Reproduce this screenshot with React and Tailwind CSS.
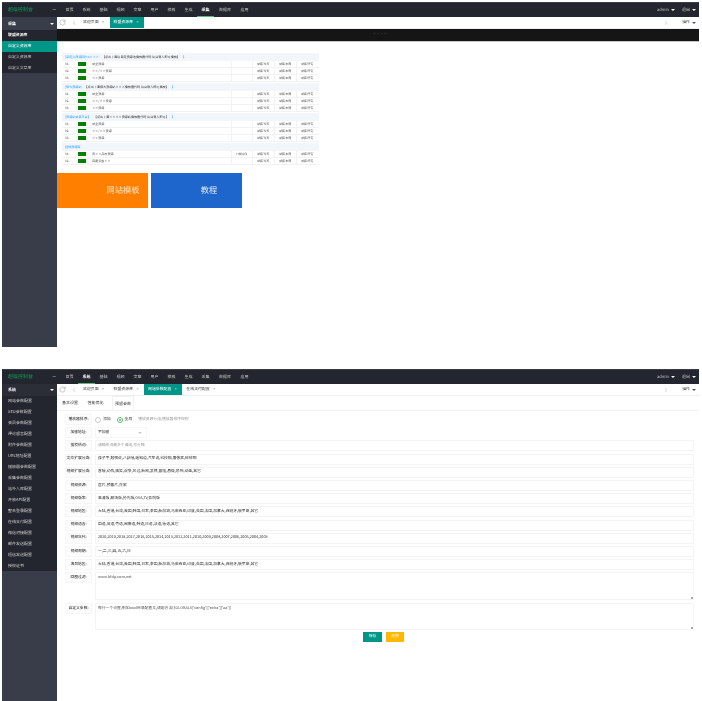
import { ChevronLeft, ChevronRight, RotateCw } from 'lucide-react';

const NAV = ['首页', '系统', '基础', '视频', '文章', '用户', '模板', '生成', '采集', '数据库', '应用'];
const COLLECT_MENU = ['联盟资源库', '自定义资源库', '自定义资源库', '自定义文章库'];
const SYSTEM_MENU = [
  '网站参数配置', 'SEO参数配置', '会员参数配置', '评论留言配置', '附件参数配置', 'URL地址配置', '播放器参数配置', '采集参数配置',
  '站外入库配置', '开放API配置', '整合登录配置', '在线支付配置', '微信对接配置', '邮件发送配置', '短信发送配置', '授权证书',
];

const AREAS = '大陆,香港,台湾,美国,韩国,日本,泰国,新加坡,马来西亚,印度,英国,法国,加拿大,西班牙,俄罗斯,其它';
const FIELDS = [
  ['文章扩展分类:', '孩子不,勉强说,八卦哦,遥知道,汽车说,科技咖,奢侈家,碎碎啊'],
  ['视频扩展分类:', '喜哦,动作,搞笑,战争,风过,新闻,武侠,冒险,悬疑,恐怖,动画,其它'],
  ['视频资源:', '正片,预告片,花絮'],
  ['视频版本:', '高清版,剧场版,抢先版,OVA,TV,影院版'],
  ['视频地区:', AREAS],
  ['视频语言:', '国语,英语,粤语,闽南语,韩语,日语,法语,德语,其它'],
  ['视频年代:', '2020,2019,2018,2017,2016,2015,2014,2013,2012,2011,2010,2009,2008,2007,2006,2005,2004,2003'],
  ['视频周期:', '一,二,三,四,五,六,日'],
  ['演员地区:', AREAS],
];

const SECTIONS = [
  { title: '[自定义资源网Pro×××', note: '【点击下面后自定资源地播放器代码 后台导入即可播放】', rows: ['采全资源', '××/××资源', '××资源'] },
  { title: '[猫大资源站', note: '【点击下面猫大资源站×××播放器代码 后台导入即可播放】', rows: ['采全资源', '××/××资源', '××资源'] },
  { title: '[资源站采集平台】', note: '【点击下面××××资源站播放器代码 后台导入即可】', rows: ['采全资源', '××/××资源', '××资源'] },
  { title: '挂载资源库', note: '', rows: ['青××品质资源', '百度云盘××'] },
];

function Caret({ className = 'border-t-white' }) {
  return <span className={`inline-block w-0 h-0 border-x-[2px] border-x-transparent border-t-[2px] ${className}`} />;
}

function Header({ active }) {
  return (
    <div className="h-[15px] bg-[#23262e] flex items-center text-[4px] text-[#c2c2c2] border-t border-[#3a3d45]">
      <div className="w-[54px] shrink-0 pl-[6px] flex justify-between items-center">
        <span className="text-[#0f9d58] text-[5px]">超级控制台</span>
        <span className="text-white leading-none">—</span>
      </div>
      <nav className="flex ml-[5px] h-full">
        {NAV.map((item) => (
          <span
            key={item}
            className={`flex items-center justify-center h-full ${item === '数据库' ? 'w-[22px]' : 'w-[17px]'} ${item === active ? 'text-white font-bold border-b border-[#5fb878]' : ''}`}
          >
            {item}
          </span>
        ))}
      </nav>
      <div className="ml-auto flex items-center gap-[2px] pr-[3px]">
        <span>admin</span>
        <Caret />
        <span className="ml-[5px]">退出</span>
        <Caret />
      </div>
    </div>
  );
}

function TabBar({ tabs }) {
  return (
    <div className="h-[12px] bg-white flex items-center text-[3.9px] text-[#444] border-b border-[#eeeeee]">
      <div className="flex items-center h-full w-[22px] shrink-0 pl-[2px] gap-[5px]">
        <RotateCw className="w-[7px] h-[7px] text-[#888]" strokeWidth={1.5} />
        <ChevronLeft className="w-[6px] h-[6px] text-[#888]" strokeWidth={1.5} />
      </div>
      {tabs.map((tab) => (
        <span
          key={tab.name}
          className={`h-full flex items-center gap-[3px] pl-[4px] pr-[6px] ${tab.active ? 'bg-[#009688] text-white' : ''}`}
        >
          {tab.name}
          <span className="text-[3px] w-[2px]">×</span>
        </span>
      ))}
      <div className="ml-auto flex items-center pr-[3px]">
        <ChevronRight className="w-[6px] h-[6px] text-[#888] mr-[13px]" strokeWidth={1.5} />
        <span className="mr-[2px]">操作</span>
        <Caret className="border-t-[#555]" />
      </div>
    </div>
  );
}

function SideHead({ title, className }) {
  return (
    <div className={`flex items-center justify-between pl-[6px] pr-[3px] text-[4px] text-white font-bold ${className}`}>
      <span>{title}</span>
      <Caret />
    </div>
  );
}

function CollectSection({ section }) {
  return (
    <div>
      <div className="h-[8px] bg-[#f2f6fa] flex items-center pl-[3px] text-[3.1px] text-[#333] gap-[3px]">
        <span className="text-[#1e9fff]">{section.title}</span>
        <span>{section.note}</span>
        {section.note && <span className="text-[#1e9fff]">】</span>}
      </div>
      {section.rows.map((name, i) => (
        <div key={i} className="h-[7px] flex items-center text-[3.1px] text-[#555] border-b border-[#f2f2f2]">
          <span className="w-[16px] pl-[3px] shrink-0">0{i + 1}.</span>
          <span className="w-[8px] h-[4px] bg-[#008000] shrink-0" />
          <span className="w-[145px] pl-[6px] shrink-0">{name}</span>
          <span className="w-[21px] pl-[3px] shrink-0 h-full flex items-center border-l border-[#f2f2f2]">{section.title === '挂载资源库' && i === 0 ? '下载插件' : ''}</span>
          <span className="w-[22px] pl-[4px] shrink-0 h-full flex items-center border-l border-[#f2f2f2]">采集当天</span>
          <span className="w-[22px] pl-[4px] shrink-0 h-full flex items-center border-l border-[#f2f2f2]">采集本周</span>
          <span className="pl-[4px] flex-1 h-full flex items-center border-l border-[#f2f2f2]">采集所有</span>
        </div>
      ))}
    </div>
  );
}

function Collect() {
  return (
    <section className="h-[345px] ml-[2px] w-[697px] flex flex-col">
      <Header active="采集" />
      <div className="flex flex-1 min-h-0">
        <aside className="w-[55px] shrink-0 bg-[#393d49] flex flex-col">
          <SideHead title="采集" className="h-[13px] bg-[#393d49]" />
          <div className="bg-[#23262e] h-[43px] text-[3.9px] text-[#c2c2c2]">
            {COLLECT_MENU.map((item, i) => (
              <div key={i} className={`h-[11px] flex items-center pl-[6px] ${i === 0 ? 'text-white font-bold h-[10.5px]' : ''} ${i === 1 ? 'bg-[#009688] text-white' : ''}`}>
                {item}
              </div>
            ))}
          </div>
        </aside>
        <main className="flex-1 min-w-0 bg-white">
          <TabBar tabs={[{ name: '欢迎页面' }, { name: '联盟资源库', active: true }]} />
          <div className="h-[13px] bg-[#151515] border-b border-[#c9c9c9] flex items-center justify-center text-[3.6px] text-[#444] pl-[4px]">
            ××××
          </div>
          <div className="mt-[11px] ml-[5px] w-[257px]">
            {SECTIONS.map((section, i) => (
              <div key={i} className={i < 3 ? 'h-[30px]' : ''}>
                <CollectSection section={section} />
              </div>
            ))}
          </div>
          <div className="flex mt-[8px] gap-[3px]">
            <div className="w-[91px] h-[35px] bg-[#ff8000] text-[#fbe6c8] text-[8.2px] flex items-center justify-center pl-[41px]">网站模板</div>
            <div className="w-[91px] h-[35px] bg-[#1e66cc] text-[#e8f0fb] text-[8.2px] flex items-center justify-center pl-[25px]">教程</div>
          </div>
        </main>
      </div>
    </section>
  );
}

function Label({ children }) {
  return (
    <div className="w-[27px] mr-[3px] h-[11px] shrink-0 flex items-center justify-center text-[#222] border border-[#f6f6f6] bg-[#fcfcfc]">{children}</div>
  );
}

function Row({ label, children }) {
  return (
    <div className="flex items-center mb-[2.2px]">
      <Label>{label}</Label>
      <div className="flex-1 min-w-0 h-[11px] border border-[#f4f4f4] flex items-center pl-[2px] text-[#333]">{children}</div>
    </div>
  );
}

function TextRow({ label, value, height }) {
  return (
    <div className="flex items-start mb-[3px]">
      <Label>{label}</Label>
      <div className={`flex-1 min-w-0 border border-[#f4f4f4] px-[2px] py-[2px] text-[#555] relative ${height}`}>
        {value}
        <span className="absolute right-[0px] bottom-[0px] w-[2px] h-[2px] bg-[#aaaaaa]" />
      </div>
    </div>
  );
}

function Settings() {
  return (
    <section className="h-[332px] mt-[22px] ml-[2px] w-[697px] flex flex-col">
      <Header active="系统" />
      <div className="flex flex-1 min-h-0">
        <aside className="w-[55px] shrink-0 bg-[#393d49] flex flex-col">
          <SideHead title="系统" className="h-[12px] bg-[#2b2e37]" />
          <div className="bg-[#23262e] h-[175px] text-[4px] text-[#d0d0d0]">
            {SYSTEM_MENU.map((item) => (
              <div key={item} className="h-[10.95px] flex items-center pl-[6px]">{item}</div>
            ))}
          </div>
        </aside>
        <main className="flex-1 min-w-0 bg-white">
          <TabBar tabs={[{ name: '欢迎页面' }, { name: '联盟资源库' }, { name: '网站参数配置', active: true }, { name: '在线支付配置' }]} />
          <div className="h-[15px] flex items-end pl-[5px] text-[4px] text-[#333] border-b border-[#f2f2f2]">
            <span className="h-full w-[17px] flex items-center">基本设置</span>
            <span className="h-full w-[33px] flex items-center justify-center">性能优化</span>
            <span className="h-full w-[22px] flex items-center justify-center border-x border-t border-[#f2f2f2]">预留参数</span>
          </div>
          <div className="pl-[8px] pr-[5px] pt-[3px] text-[3.8px]">
            <div className="flex items-center mb-[2.2px] h-[11px]">
              <Label>播放器排序:</Label>
              <div className="flex items-center text-[#333]">
                <span className="w-[6px] h-[6px] rounded-full border border-[#cccccc]" />
                <span className="ml-[2px] mr-[6px]">添加</span>
                <span className="w-[6px] h-[6px] rounded-full border border-[#5fb878] flex items-center justify-center">
                  <span className="w-[2px] h-[2px] rounded-full bg-[#5fb878]" />
                </span>
                <span className="ml-[2px] mr-[6px]">全局</span>
                <span className="text-[#999]">播放资源分组,播放器排序规则</span>
              </div>
            </div>
            <div className="flex items-center mb-[2.2px] h-[11px]">
              <Label>加密地址:</Label>
              <div className="w-[52px] h-[11px] border border-[#f6f6f6] flex items-center justify-between pl-[2px] pr-[4px] text-[#333]">
                <span>不加密</span>
                <Caret className="border-t-[#cccccc]" />
              </div>
            </div>
            <Row label="搜索热词:"><span className="text-[#999]">请输热词最多个请用,号分隔</span></Row>
            {FIELDS.map(([label, value]) => (
              <Row key={label} label={label}>{value}</Row>
            ))}
            <TextRow label="回图过滤:" value="www.bfdp.com,net" height="h-[28px]" />
            <TextRow label="自定义参数:" value="每行一个设置,例如cool目录配置文,调用方法{$GLOBALS['config']['extra']['aa']}" height="h-[27px]" />
            <div className="flex justify-center gap-[4px] pl-[8px] -mt-[1px]">
              <span className="w-[19px] h-[10px] bg-[#009688] text-white flex items-center justify-center">保存</span>
              <span className="w-[18px] h-[10px] bg-[#ffb800] text-white flex items-center justify-center">还原</span>
            </div>
          </div>
        </main>
      </div>
    </section>
  );
}

export default function App() {
  return (
    <div className="w-[702px] h-[701px] overflow-hidden bg-white pt-[2px] blur-[0.5px] [text-rendering:geometricPrecision] font-['Noto_Sans_CJK_SC','Liberation_Sans',sans-serif]">
      <Collect />
      <Settings />
    </div>
  );
}
